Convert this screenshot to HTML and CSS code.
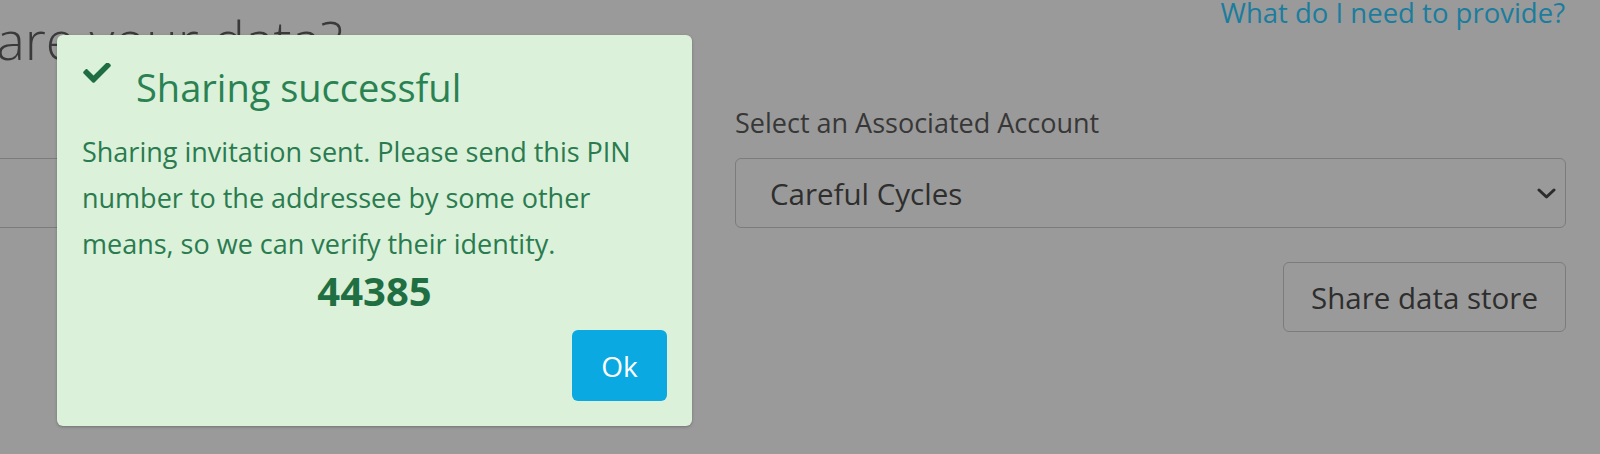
FILE: index.html
```html
<!DOCTYPE html>
<html lang="en">
<head>
<meta charset="utf-8">
<title>Share your data</title>
<link rel="stylesheet" href="styles.css">
</head>
<body>
<div class="page">
  <div class="topbar">
    <div class="page-title-clip"><h1 class="page-title">How would you like to share your data?</h1></div>
    <a class="help-link" href="#">What do I need to provide?</a>
  </div>
  <div class="form-row">
    <div class="field">
      <div class="field-label-spacer"></div>
      <div class="input"></div>
    </div>
    <div class="field">
      <label class="field-label">Select an Associated Account</label>
      <div class="select">
        <span>Careful Cycles</span>
        <svg class="chevron" width="19" height="11" viewBox="0 0 19 11"><path d="M2 2 L9.5 9 L17 2" fill="none" stroke="#2b2b2b" stroke-width="3" stroke-linecap="round" stroke-linejoin="round"/></svg>
      </div>
      <div class="actions">
        <button class="btn-outline">Share data store</button>
      </div>
    </div>
  </div>

  <div class="modal">
    <div class="modal-header">
      <svg class="check" width="28" height="20" viewBox="0 0 512 370"><path fill="#1f6e43" d="M173.9 359.4l-166.4-166.4c-10-10-10-26.2 0-36.2l36.2-36.2c10-10 26.2-10 36.2 0L192 232.7 432.1-7.4c10-10 26.2-10 36.2 0l36.2 36.2c10 10 10 26.2 0 36.2l-294.4 294.4c-10 10-26.2 10-36.2 0z"/></svg>
      <h2 class="modal-title">Sharing successful</h2>
    </div>
    <p class="modal-text">Sharing invitation sent. Please send this PIN number to the addressee by some other means, so we can verify their identity.</p>
    <div class="pin">44385</div>
    <div class="modal-footer">
      <button class="btn-ok">Ok</button>
    </div>
  </div>
</div>
</body>
</html>
```
FILE: styles.css
```css
html, body {
  margin: 0;
  padding: 0;
}
body {
  font-family: "Open Sans", "Liberation Sans", sans-serif;
  background: #9a9a9a;
}
.page {
  position: relative;
  width: 1600px;
  height: 454px;
  overflow: hidden;
  background: #9a9a9a;
}
.topbar {
  display: flex;
  justify-content: space-between;
  align-items: flex-start;
  height: 103px;
  padding-right: 35px;
}
.page-title-clip {
  width: 343px;
  display: flex;
  justify-content: flex-end;
  overflow: hidden;
  margin-top: 7px;
}
.page-title {
  margin: 0;
  white-space: nowrap;
  font-size: 54px;
  font-weight: 300;
  line-height: 64px;
  color: #3a3a3a;
}
.help-link {
  margin-top: 0;
  font-size: 27.5px;
  line-height: 26px;
  color: #1a7d9e;
  text-decoration: none;
}
.form-row {
  display: grid;
  grid-template-columns: 920px 831px;
  column-gap: 55px;
  margin-left: -240px;
}
.field-label,
.field-label-spacer {
  display: block;
  height: 40px;
  font-size: 27px;
  line-height: 40px;
  margin-bottom: 15px;
  color: #373737;
}
.input {
  height: 68px;
  border: 1px solid #7c7c7c;
  border-radius: 6px;
}
.select {
  height: 68px;
  border: 1px solid #7c7c7c;
  border-radius: 6px;
  display: flex;
  align-items: center;
  justify-content: space-between;
  padding: 0 9px 0 34px;
  font-size: 29.5px;
  color: #2e2e2e;
}
.chevron {
  display: block;
}
.actions {
  display: flex;
  justify-content: flex-end;
  margin-top: 34px;
}
.btn-outline {
  height: 70px;
  padding: 0 27px;
  background: transparent;
  border: 1px solid #7c7c7c;
  border-radius: 6px;
  font-family: "Open Sans", "Liberation Sans", sans-serif;
  font-size: 29.5px;
  color: #2e2e2e;
}
.modal {
  position: absolute;
  left: 57px;
  top: 35px;
  width: 585px;
  padding: 29px 25px 25px 25px;
  background: #dbf1da;
  border-radius: 6px;
  box-shadow: 0 1px 3px rgba(0, 0, 0, 0.25);
  color: #2a7b4f;
}
.modal-header {
  display: flex;
  align-items: flex-start;
  gap: 25px;
}
.check {
  display: block;
  margin-left: 1px;
  margin-top: -1px;
  flex: none;
}
.modal-title {
  margin: 0;
  font-size: 38px;
  font-weight: 400;
  line-height: 46px;
  color: #2a8253;
}
.modal-text {
  margin: 19px 0 0 0;
  font-size: 27px;
  line-height: 46px;
}
.pin {
  text-align: center;
  font-size: 40px;
  font-weight: 700;
  line-height: 48px;
  color: #1f6f42;
}
.modal-footer {
  display: flex;
  justify-content: flex-end;
  margin-top: 15px;
}
.btn-ok {
  width: 95px;
  height: 71px;
  background: #0aa9e2;
  border: none;
  border-radius: 6px;
  color: #ffffff;
  font-family: "Open Sans", "Liberation Sans", sans-serif;
  font-size: 28px;
}
```
